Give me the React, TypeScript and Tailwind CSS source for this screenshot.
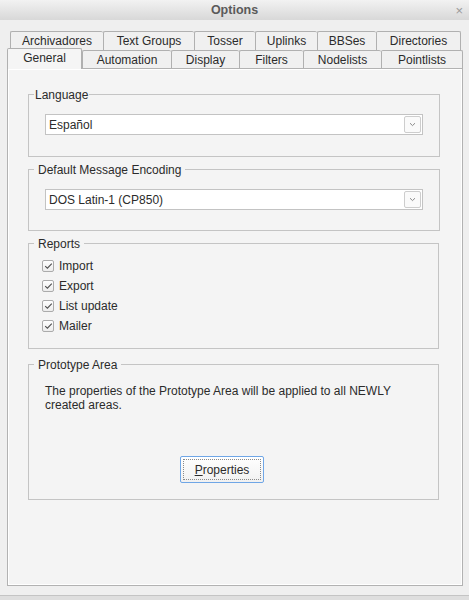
import React from "react";

const row1 = [
  { label: "Archivadores", w: "w-[93px]" },
  { label: "Text Groups", w: "w-[91px]" },
  { label: "Tosser", w: "w-[61px]" },
  { label: "Uplinks", w: "w-[62px]" },
  { label: "BBSes", w: "w-[59px]" },
  { label: "Directories", w: "w-[85px]", last: true },
];

const row2 = [
  { label: "Automation", w: "w-[89px]" },
  { label: "Display", w: "w-[68px]" },
  { label: "Filters", w: "w-[64px]" },
  { label: "Nodelists", w: "w-[78px]" },
  { label: "Pointlists", w: "w-[82px]", last: true },
];

function Combo({ value }: { value: string }) {
  return (
    <div className="flex h-[21px] w-[378px] items-center justify-between border border-[#c3c3c3] bg-white pl-[3px] pr-[1px]">
      <span className="leading-[14px]">{value}</span>
      <div className="flex h-[17px] w-[17px] items-center justify-center rounded-[2px] border border-[#cdcdcd] bg-[#fafafa]">
        <svg width="7" height="5" viewBox="0 0 7 5">
          <path d="M1 1.2 L3.5 3.6 L6 1.2" fill="none" stroke="#8a8a8a" strokeWidth="1" />
        </svg>
      </div>
    </div>
  );
}

function Check({ label }: { label: string }) {
  return (
    <div className="flex h-[20px] items-center">
      <div className="flex h-[12px] w-[12px] items-center justify-center rounded-[2px] border border-[#ababab] bg-gradient-to-b from-white to-[#ececec]">
        <svg width="9" height="8" viewBox="0 0 9 8">
          <path d="M1.2 4.2 L3.4 6.2 L7.8 1.6" fill="none" stroke="#505050" strokeWidth="1.1" />
        </svg>
      </div>
      <span className="ml-[5px] leading-[14px]">{label}</span>
    </div>
  );
}

function Legend({ text, tight }: { text: string; tight?: boolean }) {
  return (
    <legend className={`ml-[5px] leading-[14px] ${tight ? "px-[1px]" : "px-[4px]"}`}>
      <span className="relative top-[1px]">{text}</span>
    </legend>
  );
}

export default function App() {
  return (
    <div className="flex h-[600px] w-[469px] flex-col overflow-hidden bg-[#efefef] font-['Liberation_Sans',Arial,sans-serif] text-[12px] text-[#2b2b2b]">
      {/* Title bar */}
      <div className="grid h-[20px] grid-cols-[1fr_auto_1fr] items-center bg-gradient-to-b from-[#f2f2f2] to-[#d8d8d8]">
        <div />
        <span className="pt-[1px] text-[12.5px] font-bold text-[#5a5a5a]">Options</span>
        <div className="flex justify-end pr-[6px]">
          <span className="text-[13px] leading-none text-[#9a9a9a]">×</span>
        </div>
      </div>

      <div className="flex flex-1 flex-col pt-[11px]">
        {/* Tab row 1 */}
        <div className="ml-[10px] flex h-[19px]">
          {row1.map((t) => (
            <div
              key={t.label}
              className={`${t.w} flex items-center justify-center rounded-t-[2px] border-l border-t border-[#b0b0b0] bg-[#f0f0f0] ${t.last ? "border-r" : ""}`}
            >
              {t.label}
            </div>
          ))}
        </div>
        {/* Tab row 2 */}
        <div className="relative z-10 ml-[7px] flex h-[18px] items-start">
          <div className="-mt-[2px] flex h-[21px] w-[75px] items-center justify-center rounded-t-[2px] border-l border-r border-t border-[#b0b0b0] bg-[#f5f5f5] pb-[2px]">
            General
          </div>
          {row2.map((t) => (
            <div
              key={t.label}
              className={`${t.w} flex h-[18px] items-center justify-center rounded-t-[2px] border-t border-[#b0b0b0] bg-[#f0f0f0] ${t.last ? "border-r" : ""} border-l`}
            >
              {t.label}
            </div>
          ))}
        </div>

        {/* Panel */}
        <div className="ml-[7px] h-[518px] w-[456px] border border-[#b2b2b2] bg-[#f4f4f4] pl-[20px] pt-[18px] shadow-[inset_1px_1px_0_#ffffff,inset_-1px_-1px_0_#ffffff]">
          <fieldset className="w-[411px] border border-[#c4c4c4]">
            <Legend text="Language" tight />
            <div className="px-[16px] pb-[21px] pt-[13px]">
              <Combo value="Español" />
            </div>
          </fieldset>

          <fieldset className="mt-[5px] w-[411px] border border-[#c4c4c4]">
            <Legend text="Default Message Encoding" />
            <div className="px-[16px] pb-[20px] pt-[13px]">
              <Combo value="DOS Latin-1 (CP850)" />
            </div>
          </fieldset>

          <fieldset className="mt-[5px] w-[411px] border border-[#c4c4c4]">
            <Legend text="Reports" />
            <div className="flex flex-col pb-[12px] pl-[13px] pt-[6px]">
              <Check label="Import" />
              <Check label="Export" />
              <Check label="List update" />
              <Check label="Mailer" />
            </div>
          </fieldset>

          <fieldset className="mt-[8px] w-[411px] border border-[#c4c4c4]">
            <Legend text="Prototype Area" />
            <div className="px-[16px] pb-[16px] pt-[13px]">
              <p className="leading-[14px]">
                The properties of the Prototype Area will be applied to all NEWLY created areas.
              </p>
              <div className="ml-[135px] mt-[44px] flex h-[27px] w-[84px] items-center justify-center rounded-[2px] border border-[#6fa6e6] bg-gradient-to-b from-white to-[#f1f1f1] p-[2px]">
                <div className="flex h-full w-full items-center justify-center border border-dotted border-[#8a8a8a]">
                  <span>
                    <span className="underline">P</span>roperties
                  </span>
                </div>
              </div>
            </div>
          </fieldset>
        </div>
        <div className="flex-1" />
        <div className="h-[5px] border-t border-[#c4c4c4] bg-[#dedede]" />
      </div>
    </div>
  );
}
